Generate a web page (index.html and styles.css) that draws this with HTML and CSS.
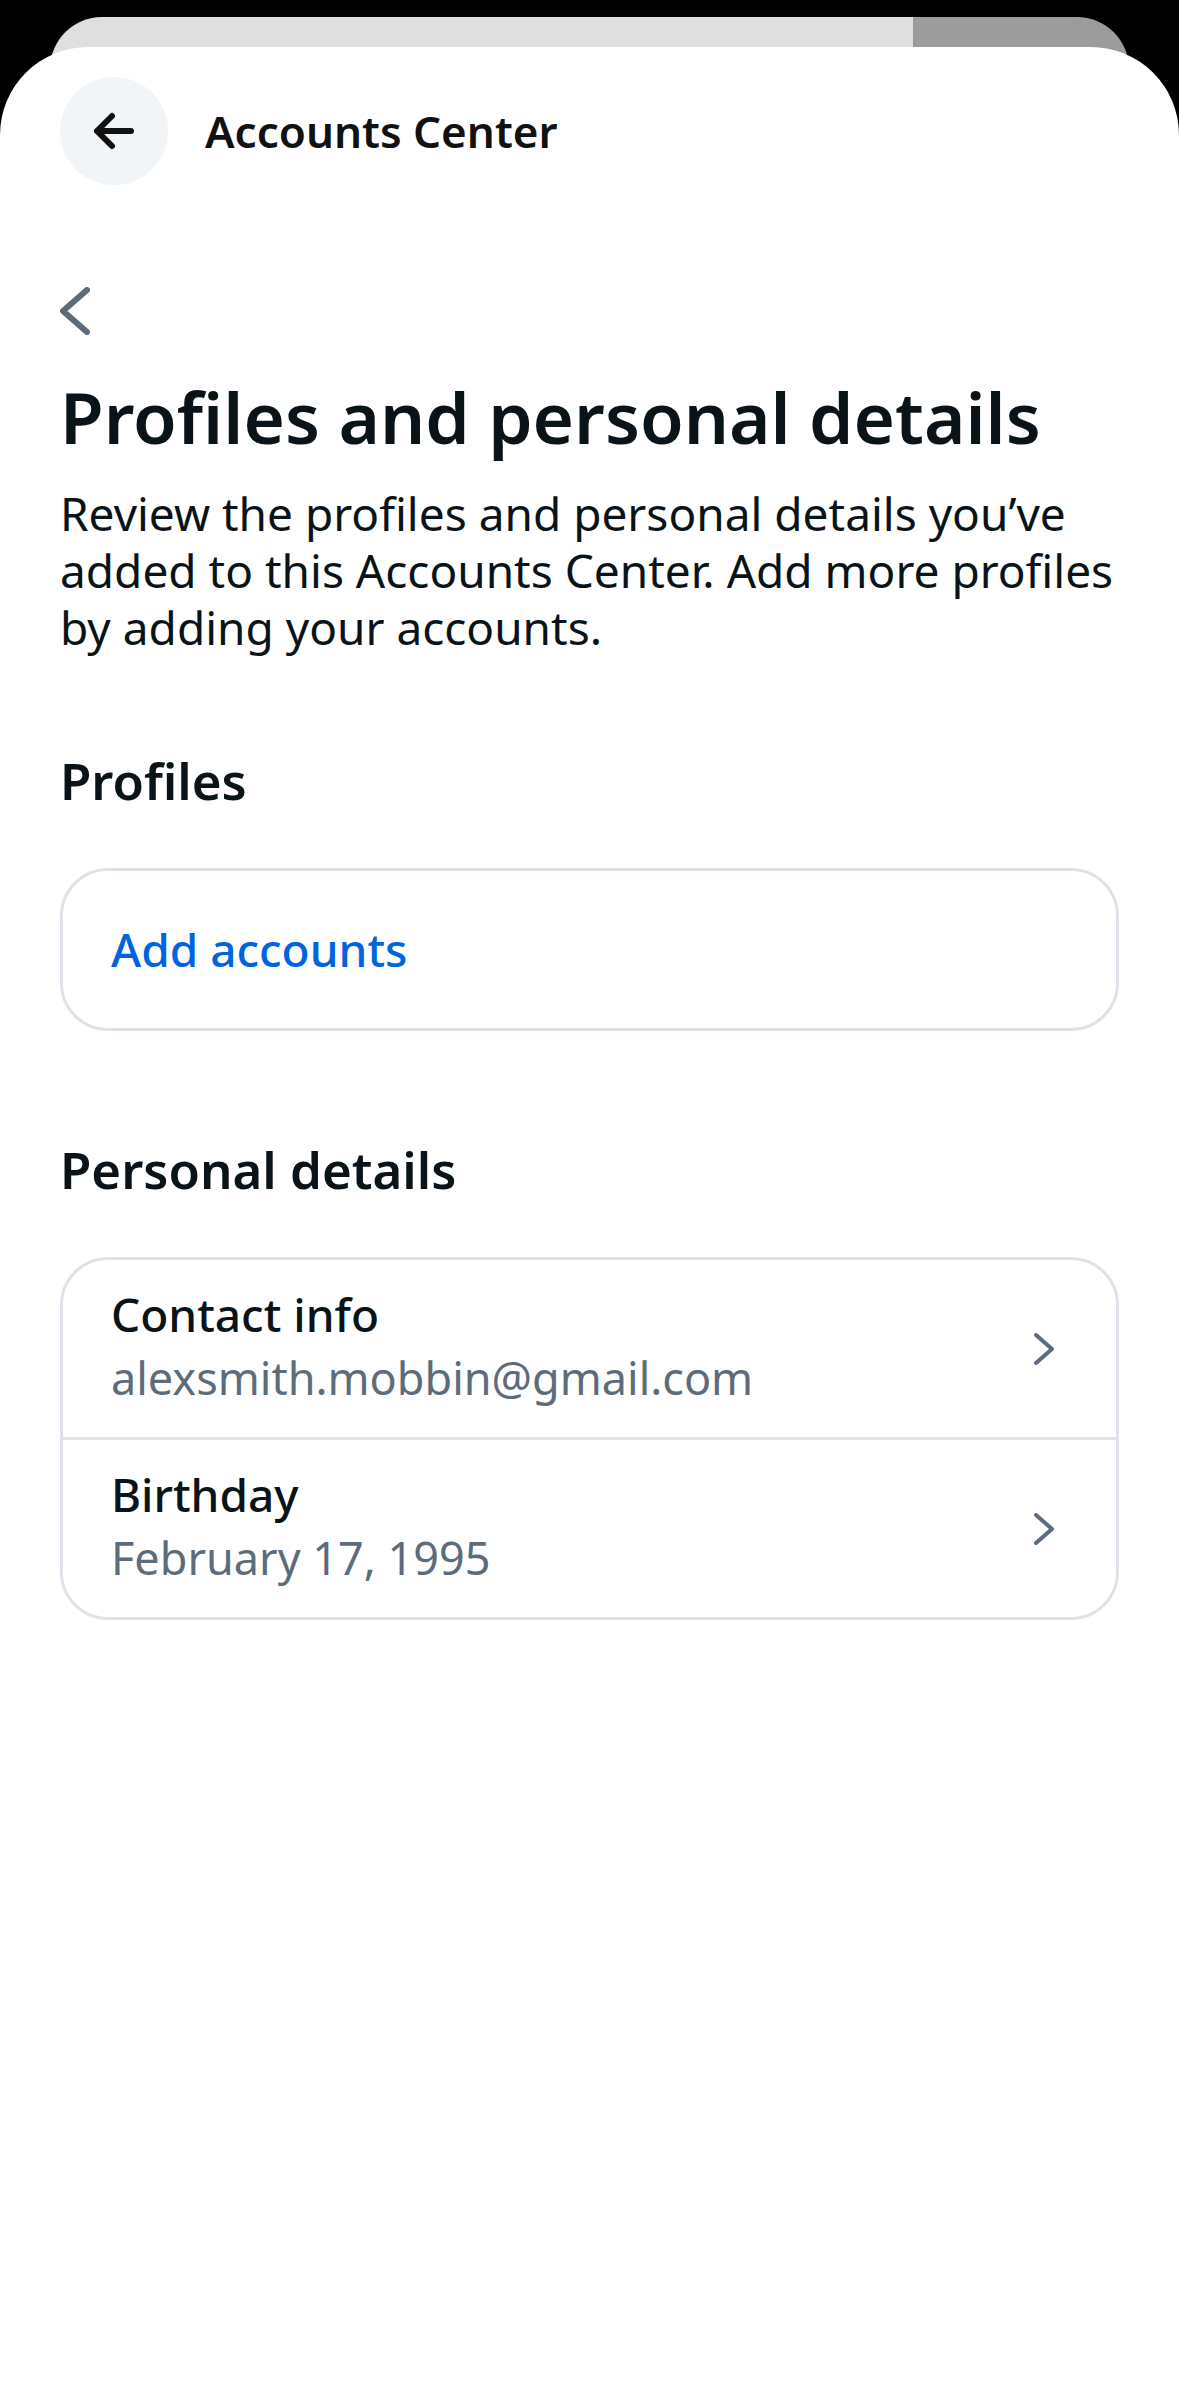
FILE: index.html
```html
<!DOCTYPE html>
<html lang="en">
<head>
  <meta charset="UTF-8">
  <meta name="viewport" content="width=device-width, initial-scale=1.0">
  <title>Accounts Center</title>
  <link rel="stylesheet" href="styles.css">
</head>
<body>
  <div class="backdrop">
    <div class="backdrop-main"></div>
    <div class="backdrop-side"></div>
  </div>

  <div class="sheet">
    <header class="topbar">
      <button class="close" aria-label="Close">
        <svg width="48" height="48" viewBox="0 0 48 48">
          <path d="M22 9 L7 24 L22 39 M7 24 H41"/>
        </svg>
      </button>
      <span class="topbar-title">Accounts Center</span>
    </header>

    <main>
      <button class="back" aria-label="Back">
        <svg width="30" height="48" viewBox="0 0 30 48">
          <path d="M27 3 L3 24 L27 45"/>
        </svg>
      </button>

      <h1>Profiles and personal details</h1>
      <p class="intro">Review the profiles and personal details you’ve added to this Accounts Center. Add more profiles by adding your accounts.</p>

      <section>
        <h2>Profiles</h2>
        <div class="card">
          <a class="row add" href="#">Add accounts</a>
        </div>
      </section>

      <section>
        <h2>Personal details</h2>
        <div class="card">
          <a class="row" href="#">
            <span class="text">
              <span class="label">Contact info</span>
              <span class="value">alexsmith.mobbin@gmail.com</span>
            </span>
            <svg class="chevron" width="20" height="32" viewBox="0 0 20 32">
              <path d="M2 2 L18 16 L2 30"/>
            </svg>
          </a>
          <a class="row" href="#">
            <span class="text">
              <span class="label">Birthday</span>
              <span class="value">February 17, 1995</span>
            </span>
            <svg class="chevron" width="20" height="32" viewBox="0 0 20 32">
              <path d="M2 2 L18 16 L2 30"/>
            </svg>
          </a>
        </div>
      </section>
    </main>
  </div>
</body>
</html>
```
FILE: styles.css
```css
:root {
  --text: #0a1317;
  --muted: #5d6c7b;
  --link: #0064e0;
  --line: #dee1e7;
}

* {
  margin: 0;
  padding: 0;
  box-sizing: border-box;
}

body {
  display: flex;
  flex-direction: column;
  min-height: 100vh;
  background: #000;
  color: var(--text);
  font-family: "Noto Sans", sans-serif;
  font-size: 46px;
  line-height: 57px;
}

button {
  border: none;
  background: none;
  cursor: pointer;
}

a {
  color: inherit;
  text-decoration: none;
}

svg {
  display: block;
  fill: none;
  stroke: currentColor;
  stroke-linecap: round;
  stroke-linejoin: round;
}

/* page peeking out behind the sheet */
.backdrop {
  display: flex;
  height: 100px;
  margin: 17px 50px 0;
  border-radius: 52px 52px 0 0;
  overflow: hidden;
}

.backdrop-main {
  flex: 4;
  background: #dfdfdf;
}

.backdrop-side {
  flex: 1;
  background: #9c9c9c;
}

.sheet {
  position: relative;
  flex: 1;
  margin-top: -70px;
  padding: 30px 60px;
  border-radius: 88px 88px 0 0;
  background: #fff;
}

.topbar {
  display: flex;
  align-items: center;
  gap: 37px;
}

.close {
  display: flex;
  align-items: center;
  justify-content: center;
  width: 108px;
  height: 108px;
  border-radius: 50%;
  background: #f2f5f7;
  color: #111;
}

.close svg {
  stroke-width: 6;
}

.topbar-title {
  color: #111;
  font-size: 44px;
  font-weight: 600;
}

.back {
  display: block;
  margin-top: 102px;
  color: var(--muted);
}

.back svg {
  stroke-width: 6;
}

h1 {
  margin-top: 36px;
  font-size: 71px;
  font-weight: 600;
  line-height: 92px;
}

.intro {
  margin-top: 22px;
}

h2 {
  font-size: 51px;
  font-weight: 600;
  line-height: 64px;
}

section {
  margin-top: 92px;
}

section + section {
  margin-top: 106px;
}

.card {
  margin-top: 56px;
  border: 3px solid var(--line);
  border-radius: 48px;
}

.row {
  display: flex;
  align-items: center;
  justify-content: space-between;
  padding: 0 62px 0 48px;
}

.row + .row {
  border-top: 3px solid var(--line);
}

.add {
  padding: 50px 48px;
  color: var(--link);
  font-weight: 500;
}

.text {
  display: flex;
  flex-direction: column;
  gap: 6px;
  padding: 26px 0 31px;
}

.label {
  font-weight: 500;
}

.value {
  color: var(--muted);
  font-size: 45px;
}

.chevron {
  color: var(--muted);
  stroke-width: 4;
}
```
